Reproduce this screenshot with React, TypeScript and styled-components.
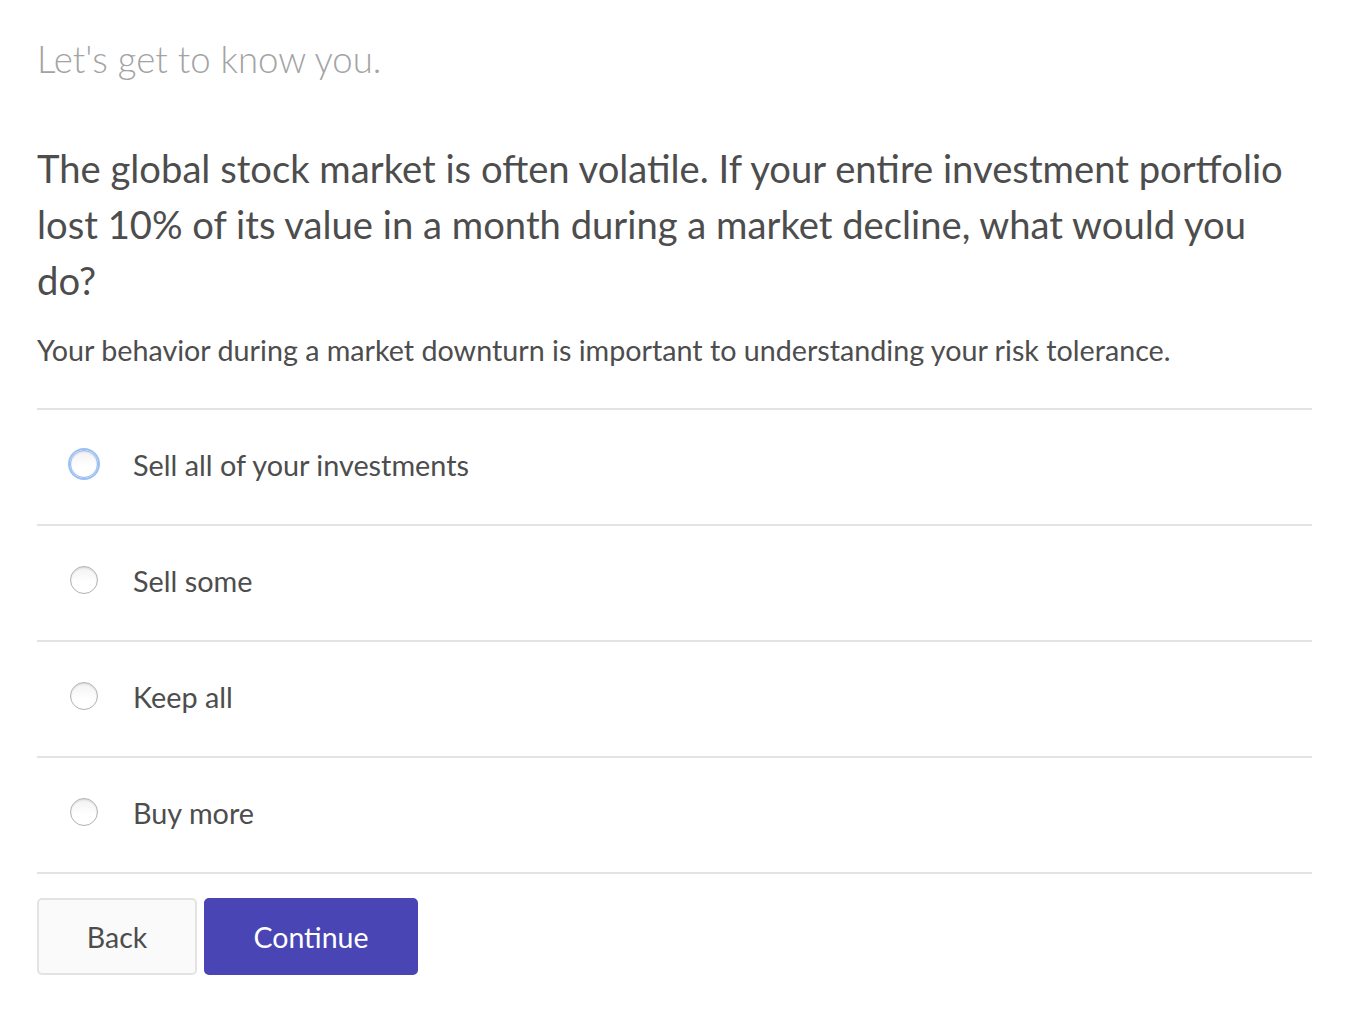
import React, { useState } from "react";
import styled, { createGlobalStyle } from "styled-components";

const Global = createGlobalStyle`
  html, body { margin: 0; padding: 0; background: #ffffff; }
  body { font-family: "Lato", "Noto Sans", sans-serif; color: #4a4a4a; }
  * { box-sizing: border-box; }
`;

const Page = styled.main`
  width: 1312px;
  padding: 35px 0 40px 37px;
`;

const Intro = styled.h2`
  margin: 0;
  font-size: 36.6px;
  line-height: 48px;
  font-weight: 300;
  color: #a3a3a3;
`;

const Question = styled.h1`
  margin: 57px 0 0;
  max-width: 1255px;
  font-size: 38.2px;
  line-height: 56px;
  font-weight: 400;
  color: #4d4d4d;
`;

const Hint = styled.p`
  margin: 22px 0 0;
  font-size: 28.7px;
  line-height: 40px;
  color: #4d4d4d;
`;

const Options = styled.div`
  margin-top: 38px;
  border-top: 2px solid #e3e3e3;
`;

const Row = styled.label`
  display: flex;
  align-items: center;
  height: 116px;
  border-bottom: 2px solid #e3e3e3;
  padding-left: 33px;
  cursor: pointer;
`;

const Radio = styled.span<{ $focused?: boolean }>`
  flex: none;
  width: 28px;
  height: 28px;
  border-radius: 50%;
  margin-top: -6px;
  border: 1px solid ${(p) => (p.$focused ? "#8fb8ee" : "#b3b3b3")};
  background: linear-gradient(#f2f2f2, #ffffff 60%);
  box-shadow: ${(p) =>
    p.$focused
      ? "0 0 0 2px rgba(120, 170, 240, 0.75), inset 0 1px 2px rgba(0,0,0,0.1)"
      : "inset 0 1px 2px rgba(0,0,0,0.12)"};
`;

const OptionText = styled.span`
  margin: -4px 0 0 35px;
  font-size: 28.8px;
  color: #4d4d4d;
`;

const Actions = styled.div`
  display: flex;
  gap: 7px;
  margin-top: 24px;
`;

const Button = styled.button<{ $primary?: boolean }>`
  height: 77px;
  width: ${(p) => (p.$primary ? "214px" : "160px")};
  border-radius: 5px;
  font-family: "Lato", "Noto Sans", sans-serif;
  font-size: 28.5px;
  cursor: pointer;
  border: 2px solid ${(p) => (p.$primary ? "#4945b5" : "#e3e3e3")};
  background: ${(p) => (p.$primary ? "#4945b5" : "#fafafa")};
  color: ${(p) => (p.$primary ? "#ffffff" : "#4d4d4d")};
`;

const choices = ["Sell all of your investments", "Sell some", "Keep all", "Buy more"];

export default function App() {
  const [sel] = useState<number | null>(null);
  return (
    <>
      <Global />
      <Page>
        <Intro>Let's get to know you.</Intro>
        <Question>
          The global stock market is often volatile. If your entire investment portfolio lost 10% of its
          value in a month during a market decline, what would you do?
        </Question>
        <Hint>
          Your behavior during a market downturn is important to understanding your risk tolerance.
        </Hint>
        <Options>
          {choices.map((c, i) => (
            <Row key={c}>
              <Radio $focused={i === 0 && sel === null} />
              <OptionText>{c}</OptionText>
            </Row>
          ))}
        </Options>
        <Actions>
          <Button>Back</Button>
          <Button $primary>Continue</Button>
        </Actions>
      </Page>
    </>
  );
}
